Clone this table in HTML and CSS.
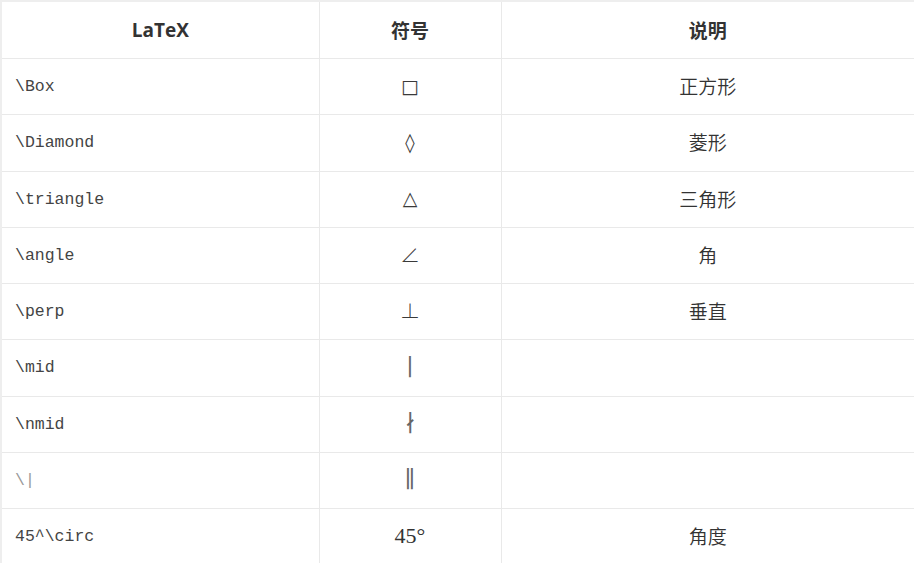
FILE: index.html
```html
<!DOCTYPE html>
<html>
<head>
<meta charset="utf-8">
<link rel="stylesheet" href="styles.css">
</head>
<body>
<table class="sym-table">
  <colgroup>
    <col class="c1"><col class="c2"><col class="c3">
  </colgroup>
  <thead>
    <tr><th>LaTeX</th><th>符号</th><th>说明</th></tr>
  </thead>
  <tbody>
    <tr><td class="code">\Box</td><td class="sym">□</td><td class="desc">正方形</td></tr>
    <tr><td class="code">\Diamond</td><td class="sym">◊</td><td class="desc">菱形</td></tr>
    <tr><td class="code">\triangle</td><td class="sym">△</td><td class="desc">三角形</td></tr>
    <tr><td class="code">\angle</td><td class="sym cjk">∠</td><td class="desc">角</td></tr>
    <tr><td class="code">\perp</td><td class="sym cjk">⊥</td><td class="desc">垂直</td></tr>
    <tr><td class="code">\mid</td><td class="sym tall">∣</td><td class="desc"></td></tr>
    <tr><td class="code">\nmid</td><td class="sym tall">∤</td><td class="desc"></td></tr>
    <tr><td class="code light">\|</td><td class="sym tall">∥</td><td class="desc"></td></tr>
    <tr><td class="code">45^\circ</td><td class="sym num">45°</td><td class="desc">角度</td></tr>
  </tbody>
</table>
</body>
</html>
```
FILE: styles.css
```css
html, body {
  margin: 0;
  padding: 0;
  background: #fff;
}
.sym-table {
  border-collapse: collapse;
  width: 914px;
  table-layout: fixed;
  border: 2px solid #eeeeee;
  color: #333;
}
.c1 { width: 318px; }
.c2 { width: 182px; }
.c3 { width: 414px; }
.sym-table th,
.sym-table td {
  border: 1px solid #e9e9e9;
  padding: 2px 0 0 0;
  height: 53.25px;
}
.sym-table th {
  padding-top: 0;
  height: 56px;
  font-family: "Open Sans", "Noto Sans CJK SC", sans-serif;
  font-weight: 700;
  font-size: 19px;
  text-align: center;
  color: #333;
}
.sym-table .code {
  font-family: "Liberation Mono", "DejaVu Sans Mono", monospace;
  font-size: 16.5px;
  padding: 1px 0 1px 13px;
  color: #444;
}
.sym-table .code.light { color: #999; }
.sym-table .sym {
  padding: 0 0 2px 0;
  text-align: center;
  font-family: "DejaVu Serif", "Liberation Serif", serif;
  font-size: 19px;
  font-weight: 300;
  color: #3a3a3a;
}
.sym-table .sym.cjk {
  font-family: "Noto Sans CJK SC", "DejaVu Serif", serif;
  font-size: 20px;
}
.sym-table .sym.tall {
  font-size: 23px;
  color: #666;
}
.sym-table .sym.num {
  font-family: "Liberation Serif", serif;
  font-size: 22px;
  color: #333;
}
.sym-table .desc {
  padding: 0 0 2px 0;
  text-align: center;
  font-family: "Noto Sans CJK SC", sans-serif;
  font-weight: 350;
  font-size: 19px;
  color: #333;
}
```
